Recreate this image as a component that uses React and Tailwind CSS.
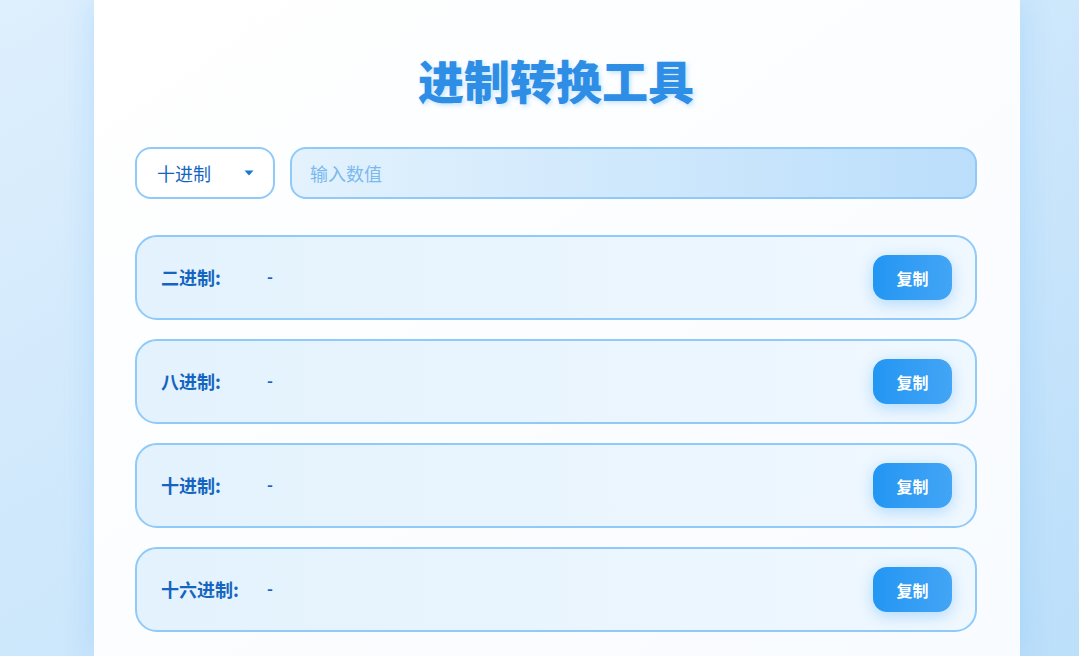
import React from "react";

const rows = ["二进制:", "八进制:", "十进制:", "十六进制:"];

export default function App() {
  return (
    <div
      className="min-h-screen w-full flex pl-[94px] bg-linear-to-br from-[#deeffd] to-[#bcdffa]"
      style={{ fontFamily: '"Noto Sans CJK SC", "Noto Sans", sans-serif' }}
    >
      <div className="w-[926px] min-h-[656px] bg-linear-to-br from-[#ffffff] to-[#f8fbff] pl-[41px] pr-[43px] pt-[51px] shadow-[0_0_30px_rgba(33,150,243,0.18)]">
        <h1
          className="text-center text-[46px] font-black leading-[56px] text-[#2e8ee6] mb-[40px]"
          style={{ textShadow: "2px 2px 4px rgba(33,150,243,0.25)" }}
        >
          进制转换工具
        </h1>
        <div className="flex gap-[15px]">
          <div className="w-[140px] h-[52px] shrink-0 rounded-[16px] border-2 border-[#90caf9] bg-white flex items-center justify-between pl-[20px] pr-[19px]">
            <span className="text-[18px] text-[#1565c0]">十进制</span>
            <svg width="10" height="6" viewBox="0 0 10 6">
              <path d="M0.5 0.5 L9.5 0.5 L5 5.5 Z" fill="#1976d2" />
            </svg>
          </div>
          <div className="flex-1 h-[52px] rounded-[16px] border-2 border-[#90caf9] bg-linear-to-r from-[#e3f2fd] to-[#bbdefb] flex items-center pl-[18px]">
            <span className="text-[18px] text-[#7ab8ee]">输入数值</span>
          </div>
        </div>
        <div className="flex flex-col gap-[19px] mt-[36px]">
          {rows.map((r) => (
            <div
              key={r}
              className="h-[85px] rounded-[22px] border-2 border-[#90caf9] bg-linear-to-r from-[#e3f2fd] to-[#f0f8ff] flex items-center pl-[24px] pr-[23px]"
            >
              <span className="w-[106px] shrink-0 text-[18px] font-bold text-[#1565c0]">{r}</span>
              <span className="flex-1 text-[16px] font-bold text-[#1565c0] -mt-[4px]">-</span>
              <div className="w-[79px] h-[45px] rounded-[14px] bg-linear-to-r from-[#2196f3] to-[#42a5f5] flex items-center justify-center text-[16px] font-bold text-white shadow-[0_4px_15px_rgba(33,150,243,0.3)]">
                复制
              </div>
            </div>
          ))}
        </div>
      </div>
    </div>
  );
}
